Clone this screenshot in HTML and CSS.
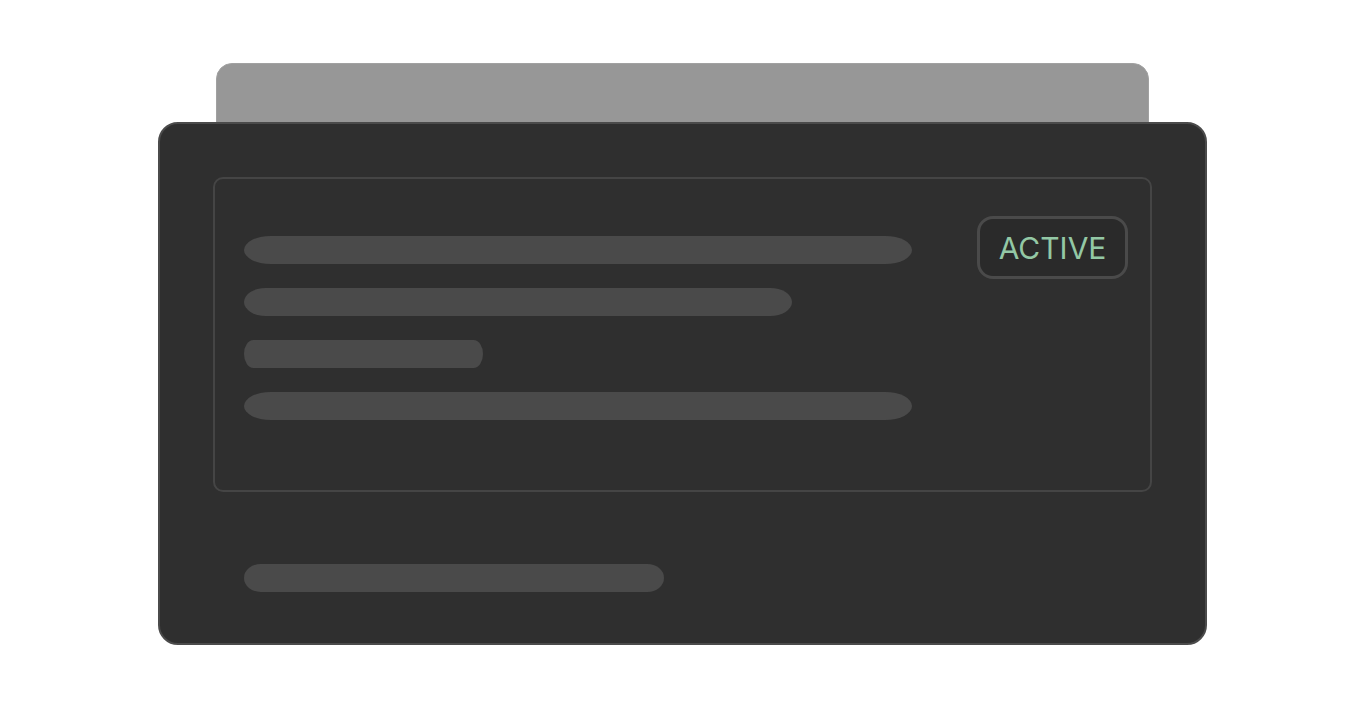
FILE: index.html
```html
<!DOCTYPE html>
<html lang="en">
  <head>
    <meta charset="UTF-8" />
    <meta name="viewport" content="width=device-width, initial-scale=1.0" />
    <title>Card</title>
    <link rel="stylesheet" href="styles.css">
  </head>
  <body>
    <div class="stack">
      <div class="back"></div>
      <div class="card">
        <div class="panel">
          <div class="lines">
            <div class="bar bar-full"></div>
            <div class="bar bar-long"></div>
            <div class="bar bar-short"></div>
            <div class="bar bar-full"></div>
          </div>
          <div class="badge">ACTIVE</div>
        </div>
        <div class="bar bar-foot"></div>
      </div>
    </div>
  </body>
</html>
```

FILE: styles.css
```css
body {
    margin: 0;
    padding: 0;
    background-color: #fff;
    font-family: Inter, 'Noto Sans', sans-serif;
}

.stack {
    width: 1049px;
    margin: 63px 0 0 158px;
}

.back {
    height: 80px;
    margin: 0 58px 0 58px;
    background-color: #979797;
    border: 1px solid #a1a1a1;
    border-radius: 16px 16px 0 0;
    box-sizing: border-box;
}

.card {
    position: relative;
    margin-top: -21px;
    background-color: #2f2f2f;
    border: 2px solid #4b4b4b;
    border-radius: 20px;
    padding: 53px 53px 51px 53px;
}

.panel {
    display: flex;
    justify-content: space-between;
    align-items: flex-start;
    height: 315px;
    box-sizing: border-box;
    border: 2px solid #454545;
    border-radius: 10px;
    padding: 37px 22px 0 29px;
}

.lines {
    display: flex;
    flex-direction: column;
    gap: 24px;
    margin-top: 20px;
    width: 668px;
}

.bar {
    height: 28px;
    background-color: #4a4a4a;
    border-radius: 4% / 50%;
}

.bar-full { width: 668px; }
.bar-long { width: 548px; }
.bar-short { width: 239px; }

.bar-foot {
    width: 420px;
    margin: 72px 0 0 31px;
}

.badge {
    width: 151px;
    height: 63px;
    box-sizing: border-box;
    display: flex;
    align-items: center;
    justify-content: center;
    background-color: #2a2a2a;
    border: 3px solid #4a4a4a;
    border-radius: 16px;
    color: #93c8a5;
    font-size: 30px;
    font-weight: 400;
}
```
